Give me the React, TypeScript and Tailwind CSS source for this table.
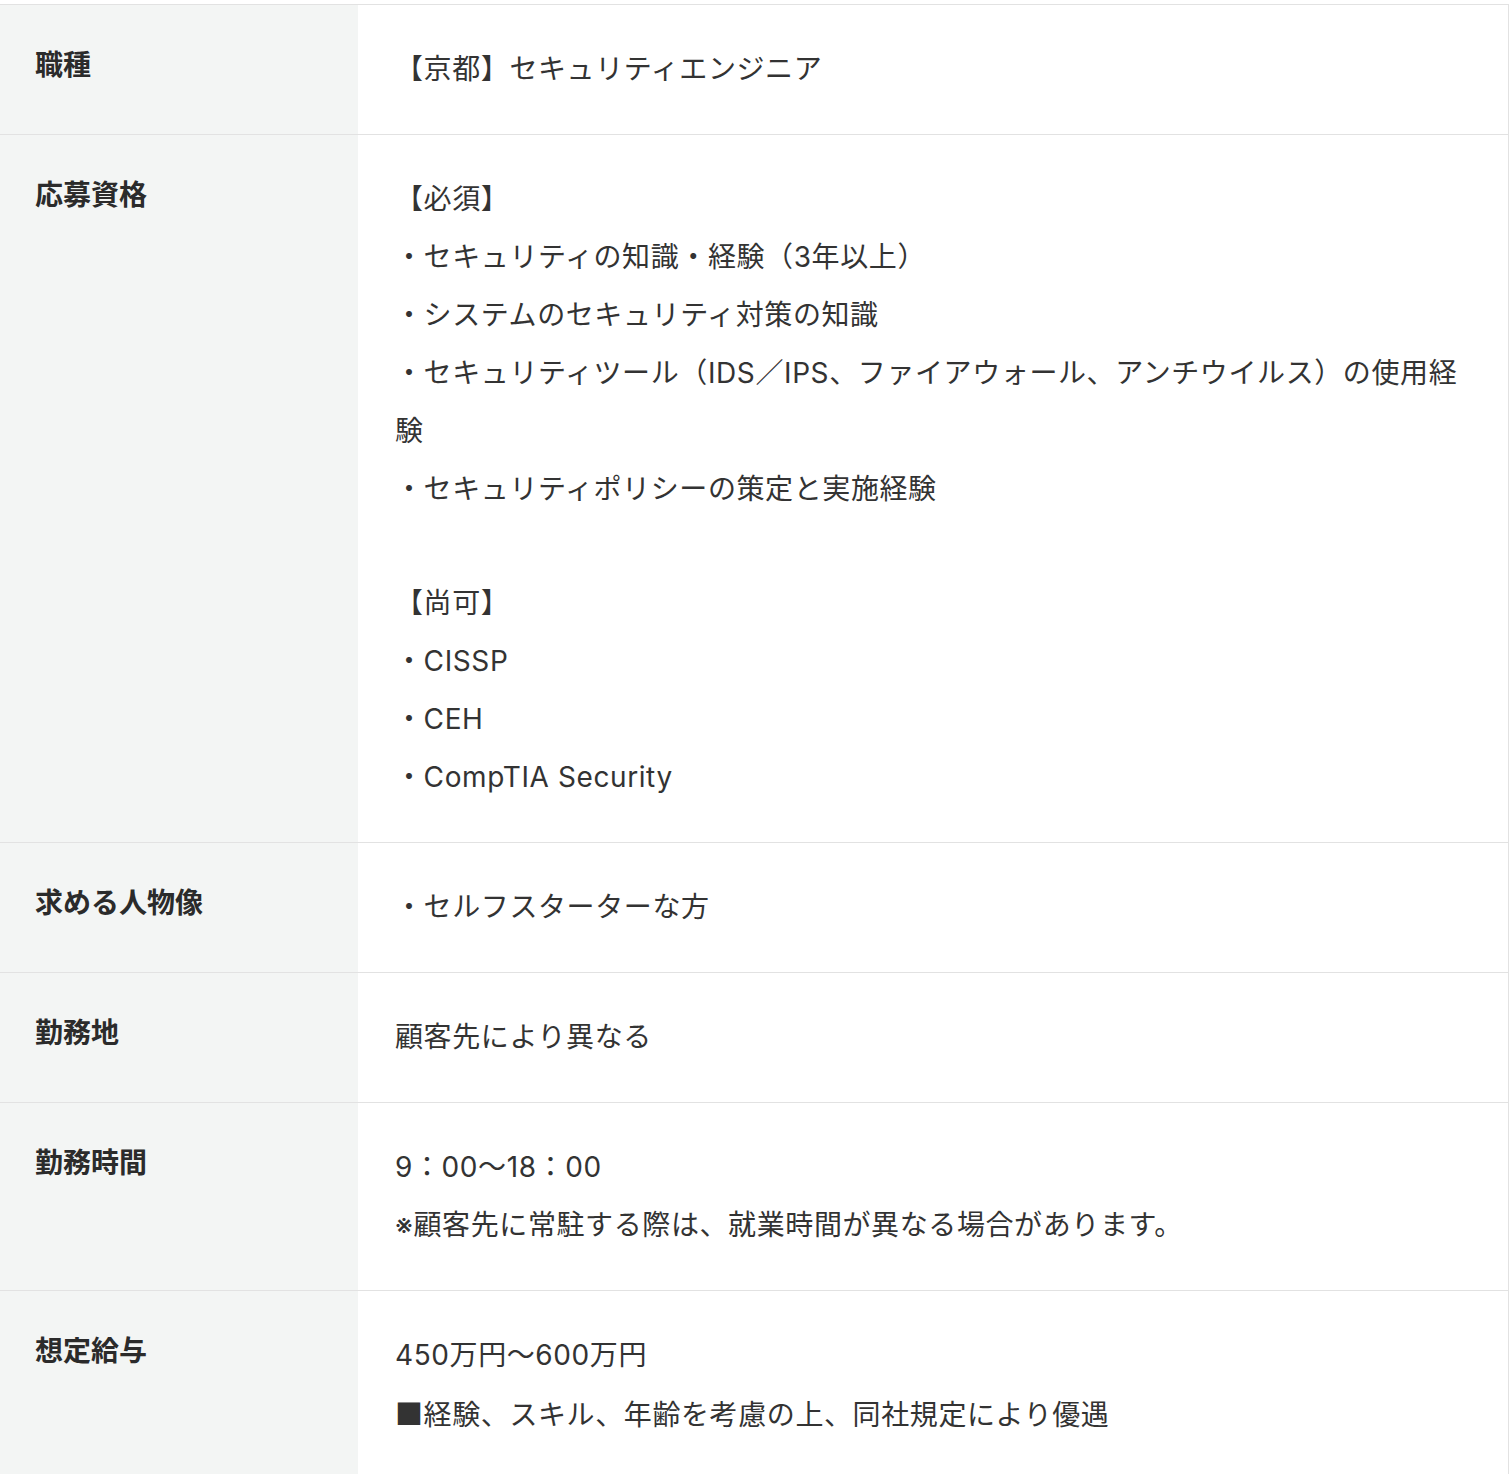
const rows: { label: string; lines: string[] }[] = [
  { label: '職種', lines: ['【京都】セキュリティエンジニア'] },
  {
    label: '応募資格',
    lines: [
      '【必須】',
      '・セキュリティの知識・経験（3年以上）',
      '・システムのセキュリティ対策の知識',
      '・セキュリティツール（IDS／IPS、ファイアウォール、アンチウイルス）の使用経',
      '験',
      '・セキュリティポリシーの策定と実施経験',
      '',
      '【尚可】',
      '・CISSP',
      '・CEH',
      '・CompTIA Security',
    ],
  },
  { label: '求める人物像', lines: ['・セルフスターターな方'] },
  { label: '勤務地', lines: ['顧客先により異なる'] },
  { label: '勤務時間', lines: ['9：00〜18：00', '※顧客先に常駐する際は、就業時間が異なる場合があります。'] },
  { label: '想定給与', lines: ['450万円〜600万円', '■経験、スキル、年齢を考慮の上、同社規定により優遇'] },
];

const renderLine = (line: string) => {
  // the square glyph should come from the CJK font, not Inter
  if (line.startsWith('■')) {
    return (
      <>
        <span className="font-['Noto_Sans_CJK_JP']">■</span>
        {line.slice(1)}
      </>
    );
  }
  return line;
};

const App = () => {
  return (
    <div className="min-h-screen bg-white pt-[4px] font-['Inter','Noto_Sans_CJK_JP',sans-serif]">
      <div className="w-[1509px] border-t border-r border-[#e2e2e2]">
        {rows.map((row) => (
          <div key={row.label} className="grid grid-cols-[358px_1fr] border-b border-[#e2e2e2]">
            <div className="bg-[#f3f5f4] pl-[35px] pt-[36px] text-[28px] font-bold leading-[48px] text-[#2b2b2b]">
              {row.label}
            </div>
            <div className="pl-[37px] pr-[36px] pt-[35px] pb-[36px] text-[28px] leading-[58px] tracking-[0.6px] text-[#333333]">
              {row.lines.map((line, i) =>
                line === '' ? (
                  <div key={i} className="h-[56px]" />
                ) : (
                  <div key={i} className="whitespace-nowrap">
                    {renderLine(line)}
                  </div>
                ),
              )}
            </div>
          </div>
        ))}
      </div>
    </div>
  );
};

export default App;
